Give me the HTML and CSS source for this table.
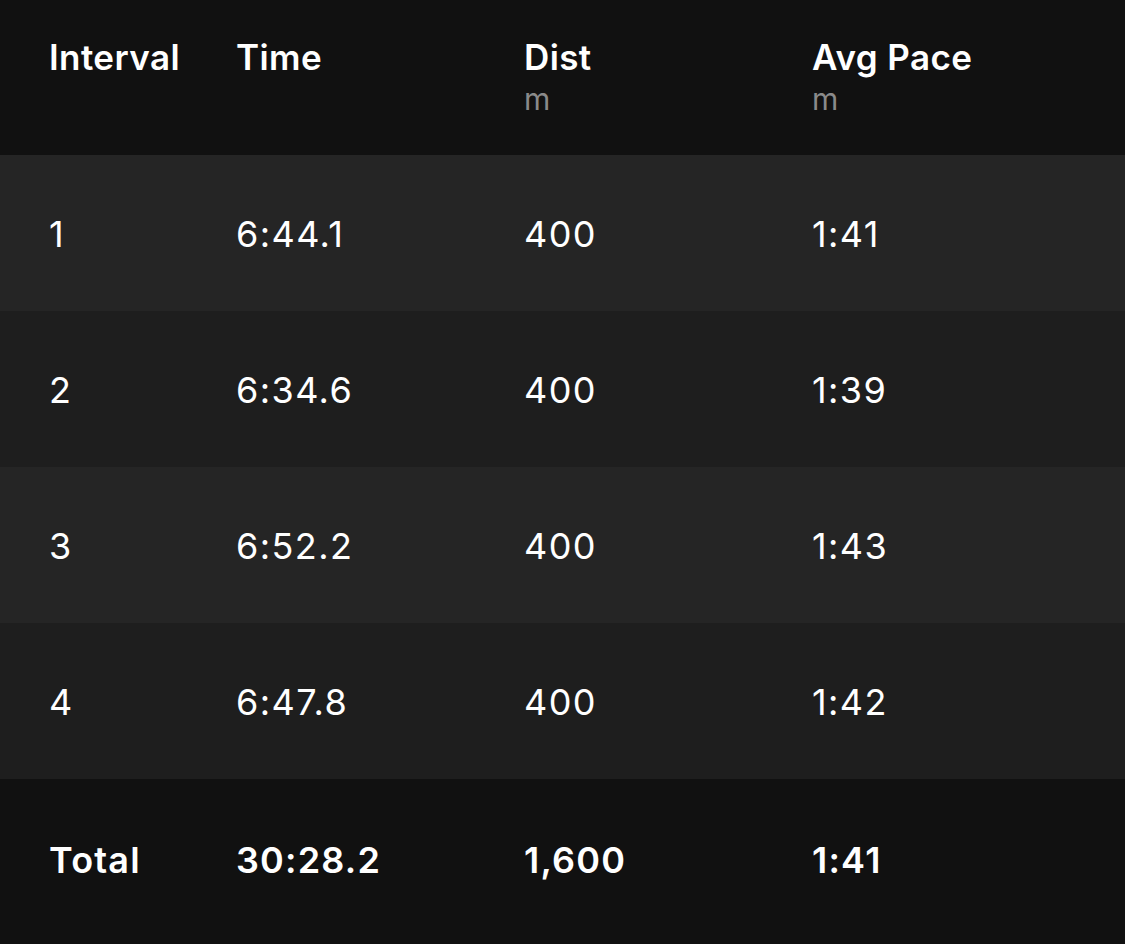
FILE: index.html
```html
<!DOCTYPE html>
<html>
<head>
<meta charset="utf-8">
<link rel="stylesheet" href="styles.css">
</head>
<body>
<div class="table">
  <div class="row head">
    <div class="cell"><div class="title">Interval</div></div>
    <div class="cell"><div class="title">Time</div></div>
    <div class="cell"><div class="title">Dist</div><div class="unit">m</div></div>
    <div class="cell"><div class="title">Avg Pace</div><div class="unit">m</div></div>
  </div>
  <div class="row data odd">
    <div class="cell">1</div><div class="cell">6:44.1</div><div class="cell">400</div><div class="cell">1:41</div>
  </div>
  <div class="row data even">
    <div class="cell">2</div><div class="cell">6:34.6</div><div class="cell">400</div><div class="cell">1:39</div>
  </div>
  <div class="row data odd">
    <div class="cell">3</div><div class="cell">6:52.2</div><div class="cell">400</div><div class="cell">1:43</div>
  </div>
  <div class="row data even">
    <div class="cell">4</div><div class="cell">6:47.8</div><div class="cell">400</div><div class="cell">1:42</div>
  </div>
  <div class="row total">
    <div class="cell">Total</div><div class="cell">30:28.2</div><div class="cell">1,600</div><div class="cell">1:41</div>
  </div>
</div>
</body>
</html>
```
FILE: styles.css
```css
html, body {
  margin: 0;
  padding: 0;
  background: #111111;
}
body {
  font-family: Inter, "Noto Sans", sans-serif;
  color: #ffffff;
  width: 1125px;
  height: 944px;
  overflow: hidden;
}
.table {
  display: flex;
  flex-direction: column;
}
.row {
  display: grid;
  grid-template-columns: 187px 288px 288px 1fr;
  padding-left: 49px;
  box-sizing: border-box;
}
.head {
  height: 155px;
  background: #111111;
  padding-top: 36px;
}
.title {
  font-size: 35px;
  font-weight: 600;
  line-height: 42px;
  letter-spacing: 0.4px;
}
.unit {
  font-size: 30px;
  line-height: 36px;
  margin-top: 3px;
  color: #8a8a8a;
  font-weight: 400;
}
.data {
  height: 156px;
  align-items: center;
  font-size: 36px;
  font-weight: 400;
  letter-spacing: 1.4px;
  padding-top: 2px;
}
.odd { background: #252525; }
.even { background: #1e1e1e; }
.total {
  height: 165px;
  align-items: center;
  font-size: 36px;
  font-weight: 600;
  letter-spacing: 1.2px;
  background: #111111;
  padding-bottom: 4px;
}
```
